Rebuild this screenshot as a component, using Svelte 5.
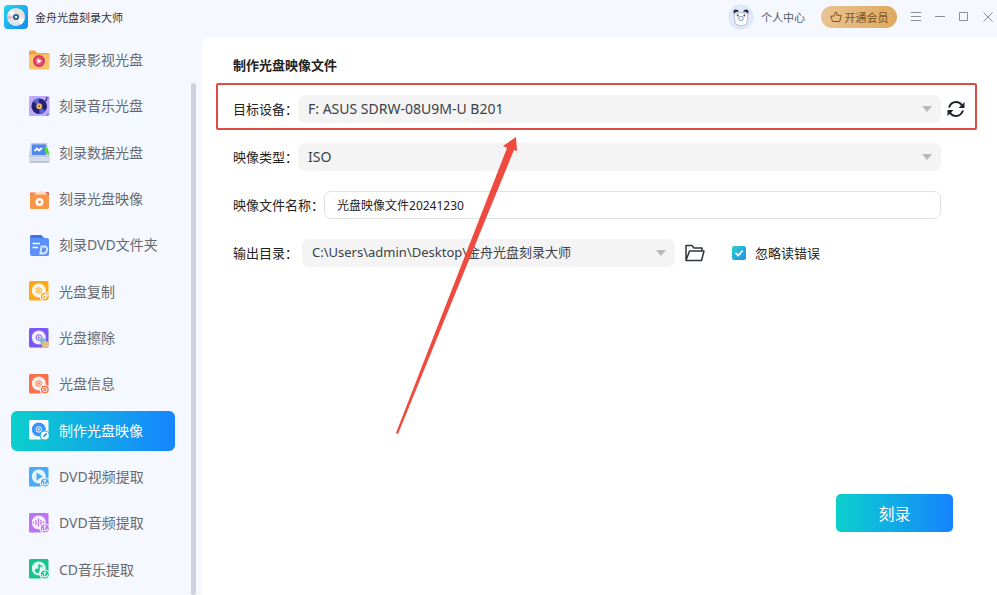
<script lang="ts">
  const menu = [
    { id: 'video', label: '刻录影视光盘' },
    { id: 'music', label: '刻录音乐光盘' },
    { id: 'data', label: '刻录数据光盘' },
    { id: 'image', label: '刻录光盘映像' },
    { id: 'folder', label: '刻录DVD文件夹' },
    { id: 'copy', label: '光盘复制', color: '#fba91a' },
    { id: 'erase', label: '光盘擦除', color: '#7a57f5' },
    { id: 'info', label: '光盘信息', color: '#fb6f4b' },
    { id: 'make', label: '制作光盘映像', color: '#ffffff' },
    { id: 'dvdvideo', label: 'DVD视频提取', color: '#4aaaf5' },
    { id: 'dvdaudio', label: 'DVD音频提取', color: '#b973f3' },
    { id: 'cdaudio', label: 'CD音乐提取', color: '#16c48c' }
  ];

  let active = $state('make');
  let device = $state('F: ASUS SDRW-08U9M-U B201');
  let imageType = $state('ISO');
  let fileName = $state('光盘映像文件20241230');
  let outputDir = $state('C:\\Users\\admin\\Desktop\\金舟光盘刻录大师');
  let ignoreErrors = $state(true);
</script>

{#snippet badge(color, bg)}
  <circle cx="15.8" cy="15.6" r="5.2" fill={bg} />
  <circle cx="15.8" cy="15.6" r="4" fill={color} />
{/snippet}

{#snippet menuIcon(id, color, selected)}
  <svg class="menu-icon" viewBox="0 0 21 21" aria-hidden="true">
    {#if id == 'video'}
      <path d="M0 2Q0 .5 1.5.5H6l2 2.5h11q1.500 0 1.500 1.500V10H0Z" fill="#f2a23f" />
      <rect y="4.500" width="20.500" height="15" rx="1.500" fill="#fbc36a" />
      <circle cx="10" cy="11" r="6" fill="#d9365f" />
      <circle cx="10" cy="11" r="4.200" fill="#e85577" />
      <path d="M8.300 8.300v5.400l4.500-2.700Z" fill="#fff" />
    {:else if id == 'music'}
      <rect width="20.500" height="20" rx="1.500" fill="#bdaaf8" />
      <circle cx="10.200" cy="10.200" r="7.800" fill="#25226f" />
      <path d="M10.200 10.200 4 5.300a7.800 7.800 0 0 1 6-2.900ZM10.200 10.200l6.300 4.800a7.800 7.800 0 0 1-6 3Z" fill="#4f65d8" />
      <circle cx="10.200" cy="10.200" r="2.900" fill="#eeb261" />
      <circle cx="10.200" cy="10.200" r=".8" fill="#54376d" />
      <path d="M17.500 4.500V1.500l2 .7" fill="none" stroke="#422d82" />
      <circle cx="16.800" cy="4.500" r="1" fill="#422d82" />
      <path d="M17 19h2v-2" fill="none" stroke="#8266d8" />
    {:else if id == 'data'}
      <path d="m2 1h16l2.500 14v5H0v-5Z" fill="#c3cde2" />
      <rect x="3" y="2.500" width="14" height="10.500" fill="#4f86f0" />
      <path d="m5.500 9 2.500-2.500 2 2 3-2.500" fill="none" stroke="#fff" stroke-width="1.800" />
      <path d="M0 15h20.500v5.500H0Z" fill="#d5dceb" />
      <path d="M1 20h19" stroke="#9daac5" />
      <path d="M15 5q4 0 5 6v2l-4-3Z" fill="#4ede2f" />
    {:else if id == 'image'}
      <path d="M1 3.500h6l2 2h10.500V9H1Z" fill="#f5803c" />
      <path d="m5 5 7-3 6 2v4H5Z" fill="#ffe0c7" />
      <path d="m16 3 4 .5v3Z" fill="#d84a42" />
      <rect x="1" y="5.500" width="19" height="14.500" rx="1.500" fill="#fa9645" />
      <circle cx="10.500" cy="13" r="4" fill="#fff" />
      <circle cx="10.500" cy="13" r="1.500" fill="#fa8b3c" />
    {:else if id == 'folder'}
      <path d="M1 2q0-2 2-2h9l3 3h3q2 0 2 2v14q0 2-2 2H3q-2 0-2-2Z" fill="#5b90f8" />
      <path d="M1 2q0-2 2-2h9l3 3H1Z" fill="#3f74e3" />
      <path d="M3.500 8.500H11M3.500 12.500H9" stroke="#fff" stroke-width="1.400" />
      <path d="m12.500 11.500-1.300 7H14q3.500 0 4-3.500.600-3.500-3-3.500Z" fill="none" stroke="#dbe8ff" stroke-width="1.800" />
    {:else}
      <rect width="19.500" height="19.500" rx="1.500" fill={color} />
      <circle cx="9.800" cy="9.500" r="7" fill={selected ? '#2685f5' : '#ffffff'} opacity=".88" />
      {#if id == 'dvdvideo'}
        <path d="M7.500 5.500v8l6.200-4Z" fill={color} />
      {:else if id == 'dvdaudio'}
        <path d="M4.500 8.500v2M7 7v5M9.500 5.500v8M12 7v5M14.500 8.500v2" stroke={color} stroke-width="1.200" />
      {:else if id == 'cdaudio'}
        <path d="M10 11.500v-6q1 2 3.500 2" fill="none" stroke={color} stroke-width="1.500" />
        <circle cx="8.200" cy="11.700" r="2.300" fill={color} />
      {:else}
        <circle cx="9.800" cy="9.500" r="2.700" fill="none" stroke={selected ? '#ffffff' : color} />
        <circle cx="9.800" cy="9.500" r="1" fill={selected ? '#ffffff' : color} />
      {/if}
      {#if id == 'erase'}
        <path d="m10 12 3-3 5 4v6h-4Z" fill="#82b9cd" />
        <path d="m12 16 3-3 5 1v4l-3 2h-3Z" fill="#e1bd88" />
      {:else if selected}
        {@render badge('#ffffff', '#0fbed9')}
        <path d="m14 17.300.5-1.800 2.800-2.700 1.100 1.100-2.700 2.800Z" fill="#258cf5" />
      {:else}
        {@render badge(color, '#ffffff')}
        {#if id == 'copy'}
          <rect x="13.800" y="14.300" width="3" height="3" fill="none" stroke="#fff" />
          <path d="M15 13.200h3v3" fill="none" stroke="#fff" />
        {:else if id == 'info'}
          <circle cx="15.800" cy="15.600" r="2.200" fill="none" stroke="#fff" />
          <circle cx="15.800" cy="15.600" r=".7" fill="#fff" />
        {:else}
          <path d="M15.800 16.500v-3.800m-1.500 1.500 1.500-1.500 1.500 1.500M13.500 15.500v2.200h4.600v-2.200" fill="none" stroke="#fff" />
        {/if}
      {/if}
    {/if}
  </svg>
{/snippet}

{#snippet caret()}
  <svg class="caret" viewBox="0 0 10 6" aria-hidden="true"><path d="M0 0h10L5 6Z" fill="#b9b9b9" /></svg>
{/snippet}

<div class="app">
  <header>
    <svg class="logo" viewBox="0 0 24 24" aria-hidden="true">
      <defs>
        <linearGradient id="logo-bg" x1="0" y1="0" x2="1" y2="1">
          <stop offset="0" stop-color="#25d6ed" />
          <stop offset="1" stop-color="#1788f3" />
        </linearGradient>
      </defs>
      <rect width="24" height="24" rx="4" fill="url(#logo-bg)" />
      <circle cx="12" cy="12" r="9" fill="#dfe4e8" />
      <path d="M12 12 4 8a9 9 0 0 1 4-4Z" fill="#f7f9fa" />
      <path d="m12 12 4-8a9 9 0 0 1 4.500 5Z" fill="#efe2cc" />
      <path d="m12 12 8.700 2a9 9 0 0 1-3.700 5.500Z" fill="#f8fafa" />
      <path d="m12 12-8.700 2A9 9 0 0 1 3 11Z" fill="#dcb4b9" />
      <circle cx="12" cy="12" r="3" fill="#285c83" />
      <circle cx="12" cy="12" r="1.200" fill="#e9faff" />
    </svg>
    <span class="app-name">金舟光盘刻录大师</span>
    <button class="user">
      <svg class="avatar" viewBox="0 0 26 26" aria-hidden="true">
        <circle cx="13" cy="13" r="12.500" fill="#d6e9f5" />
        <circle cx="13" cy="13" r="11" fill="#e4e8fd" />
        <path d="M6.500 10q-.5 9 2 10.500 4.500 3 9 0 2.500-1.500 2-10.500-6.500-3-13 0Z" fill="#fff" stroke="#8d92a8" stroke-width=".6" />
        <path d="M5.500 9.500q-.5-4 2-4 3 0 3.500 2-3 0-5.500 2ZM20.500 9.500q.5-4-2-4-3 0-3.500 2 3 0 5.500 2Z" fill="#2c2c40" />
        <circle cx="9.700" cy="11.500" r=".9" fill="#34344b" />
        <circle cx="16.300" cy="11.500" r=".9" fill="#34344b" />
        <circle cx="13" cy="14.500" r="2.300" fill="#eef6ff" stroke="#6a86b4" stroke-width=".8" />
      </svg>
      个人中心
    </button>
    <button class="vip">
      <svg class="thumb" viewBox="0 0 12 12" aria-hidden="true">
        <path d="M.7 5.200h3L5.600 1q1.600.2 1.300 1.900L6.700 4.300h4.500l-1.500 6.200H2.600ZM3.700 5.200" fill="none" stroke="#82571d" stroke-linejoin="round" />
      </svg>
      开通会员
    </button>
    <div class="window-buttons">
      <button aria-label="菜单"><svg viewBox="0 0 10 10"><path d="M0 .5h10M0 4.500h10M0 8.500h10" /></svg></button>
      <button aria-label="最小化"><svg viewBox="0 0 10 10"><path d="M0 4.500h10" /></svg></button>
      <button aria-label="最大化"><svg viewBox="0 0 10 10"><path d="M.5.5h8v8h-8Z" /></svg></button>
      <button aria-label="关闭"><svg viewBox="0 0 10 10"><path d="m.5.5 9 9m0-9-9 9" /></svg></button>
    </div>
  </header>

  <div class="body">
    <aside>
      <nav>
        {#each menu as item}
          <button class="menu-item" class:active={active == item.id} onclick={() => (active = item.id)}>
            {@render menuIcon(item.id, item.color, item.id == 'make')}
            <span>{item.label}</span>
          </button>
        {/each}
      </nav>
      <div class="scrollbar"></div>
    </aside>

    <main>
      <h1>制作光盘映像文件</h1>

      <div class="form">
        <div class="row marked">
          <label for="device">目标设备：</label>
          <div class="select">
            <select id="device" class="large" bind:value={device}>
              <option>F: ASUS SDRW-08U9M-U B201</option>
            </select>
            {@render caret()}
          </div>
          <button class="icon-button" aria-label="刷新">
            <svg class="refresh" viewBox="0 0 18 18">
              <path d="M2 7.500Q4 2 9 2q4 0 6 3.500M16 10.500Q14 16 9 16q-4 0-6-3.500" fill="none" stroke="#1e242b" stroke-width="2" />
              <path d="M17.500 2v6h-6ZM.5 16v-6h6Z" fill="#1e242b" />
            </svg>
          </button>
        </div>

        <div class="row inset">
          <label for="type">映像类型：</label>
          <div class="select">
            <select id="type" class="large" bind:value={imageType}>
              <option>ISO</option>
            </select>
            {@render caret()}
          </div>
        </div>

        <div class="row inset">
          <label for="name">映像文件名称：</label>
          <input id="name" class="text" type="text" bind:value={fileName} />
        </div>

        <div class="row">
          <label for="output">输出目录：</label>
          <div class="select output">
            <select id="output" bind:value={outputDir}>
              <option>C:\Users\admin\Desktop\金舟光盘刻录大师</option>
            </select>
            {@render caret()}
          </div>
          <button class="icon-button open" aria-label="打开文件夹">
            <svg class="folder" viewBox="0 0 20 18">
              <path d="M1 16.500V1.500h6l2 2.500h8v3M1 16.500 4.500 7H19l-2.500 9.500Z" fill="none" stroke="#30353b" stroke-width="1.500" stroke-linejoin="round" />
            </svg>
          </button>
          <label class="check">
            <input type="checkbox" bind:checked={ignoreErrors} />
            {#if ignoreErrors}
              <svg class="tick" viewBox="0 0 14 14" aria-hidden="true"><path d="m3.500 6.800 2.700 2.700 4.500-5" fill="none" stroke="#fff" stroke-width="1.700" /></svg>
            {/if}
            <span>忽略读错误</span>
          </label>
        </div>
      </div>

      <button class="burn">刻录</button>

      <svg class="pointer" viewBox="0 0 122 298" aria-hidden="true">
        <path d="M0 296 111 11 107 9 120 0 121 14 118 13Q70 130 2 297Z" fill="#ef4a40" />
      </svg>
    </main>
  </div>
</div>

<style>
  :global(body) {
    margin: 0;
  }

  .app {
    min-height: 100vh;
    display: flex;
    flex-direction: column;
    background: #f5f8fe;
    color: #222;
    font-family: "Noto Sans", "Noto Sans CJK SC", sans-serif;
    font-size: 13px;
  }

  button, input, select {
    font: inherit;
    color: inherit;
    margin: 0;
    box-sizing: border-box;
  }

  button {
    display: flex;
    align-items: center;
    padding: 0;
    border: 0;
    background: none;
    cursor: pointer;
  }

  svg {
    display: block;
    flex: none;
  }

  header {
    display: flex;
    align-items: center;
    height: 34px;
    padding: 0 4px 3px;
    font-size: 11px;
  }

  .logo {
    width: 24px;
    height: 24px;
    margin-right: 7px;
  }

  .app-name {
    flex: 1;
    color: #30343a;
  }

  .user {
    gap: 7px;
    margin-right: 16px;
    color: #555b63;
  }

  .avatar {
    width: 26px;
    height: 26px;
  }

  .vip {
    justify-content: center;
    gap: 3px;
    width: 76px;
    height: 22px;
    margin-right: 14px;
    border-radius: 11px;
    background: linear-gradient(90deg, #e8c393, #dfa95e);
    color: #7c5119;
  }

  .thumb {
    width: 12px;
    height: 12px;
  }

  .window-buttons {
    display: flex;
    gap: 14px;
  }

  .window-buttons svg {
    width: 10px;
    height: 10px;
    fill: none;
    stroke: #8b9097;
  }

  .body {
    flex: 1;
    display: flex;
  }

  aside {
    display: flex;
    flex: none;
    width: 196px;
    margin-right: 6px;
  }

  nav {
    flex: 1;
    display: grid;
    grid-auto-rows: 1fr;
    align-items: center;
    padding: 0 16px 2px 11px;
  }

  .menu-item {
    gap: 9px;
    height: 40px;
    padding-left: 18px;
    border-radius: 6px;
    color: #666a70;
    font-size: 14px;
    white-space: nowrap;
  }

  .menu-item.active {
    background: linear-gradient(90deg, #0bd0cc, #1684ff);
    color: #fff;
  }

  .menu-icon {
    width: 21px;
    height: 21px;
  }

  .scrollbar {
    width: 5px;
    margin-top: 46px;
    border-radius: 3px;
    background: #ccd3df;
  }

  main {
    position: relative;
    flex: 1;
    display: flex;
    flex-direction: column;
    min-width: 0;
    padding: 18px 32px 63px 31px;
    border-radius: 8px 0 0 0;
    background: #fff;
    box-sizing: border-box;
  }

  h1 {
    margin: 0 0 20px;
    font-size: 13px;
    line-height: 20px;
    font-weight: 700;
  }

  .form {
    display: flex;
    flex-direction: column;
    gap: 20px;
  }

  .row {
    position: relative;
    display: flex;
    align-items: center;
    height: 28px;
    white-space: nowrap;
  }

  .row > label:first-child,
  .menu-item span,
  .check span {
    padding-bottom: 2px;
  }

  .row.inset {
    padding-right: 24px;
  }

  .marked::after {
    content: '';
    position: absolute;
    inset: -12px -12px -7px -17px;
    border: 2px solid #de4c46;
    border-radius: 2px;
    pointer-events: none;
  }

  .select {
    position: relative;
    flex: 1;
    min-width: 0;
  }

  .select.output {
    flex: 0 1 373px;
    margin-left: 4px;
  }

  select {
    display: block;
    width: 100%;
    height: 28px;
    padding: 0 28px 2px 10px;
    border: 0;
    border-radius: 7px;
    background: #f4f4f4;
    color: #3c4148;
    appearance: none;
  }

  select.large {
    font-size: 14px;
  }

  .caret {
    position: absolute;
    top: 11px;
    right: 9px;
    width: 10px;
    height: 6px;
    pointer-events: none;
  }

  .text {
    flex: 1;
    min-width: 0;
    height: 28px;
    padding: 0 12px;
    border: 1px solid #e2e2e2;
    border-radius: 7px;
    background: #fff;
    font-size: 12px;
  }

  .icon-button {
    margin-left: 6px;
  }

  .icon-button.open {
    margin: 0 27px 0 10px;
  }

  .refresh {
    width: 18px;
    height: 18px;
  }

  .folder {
    width: 20px;
    height: 18px;
  }

  .check {
    position: relative;
    display: flex;
    align-items: center;
    gap: 9px;
  }

  .check input {
    width: 14px;
    height: 14px;
    border: 1px solid #c8cdd4;
    border-radius: 2px;
    appearance: none;
  }

  .check input:checked {
    border: 0;
    background: linear-gradient(135deg, #2fcfc4, #218ff0);
  }

  .tick {
    position: absolute;
    left: 0;
    width: 14px;
    height: 14px;
    pointer-events: none;
  }

  .burn {
    justify-content: center;
    width: 117px;
    height: 38px;
    margin: auto 12px 0 auto;
    border-radius: 5px;
    background: linear-gradient(90deg, #0bd0cc, #1684ff);
    color: #fff;
    font-size: 16px;
  }

  .pointer {
    position: absolute;
    top: 100px;
    left: 194px;
    width: 122px;
    height: 298px;
    pointer-events: none;
  }
</style>
